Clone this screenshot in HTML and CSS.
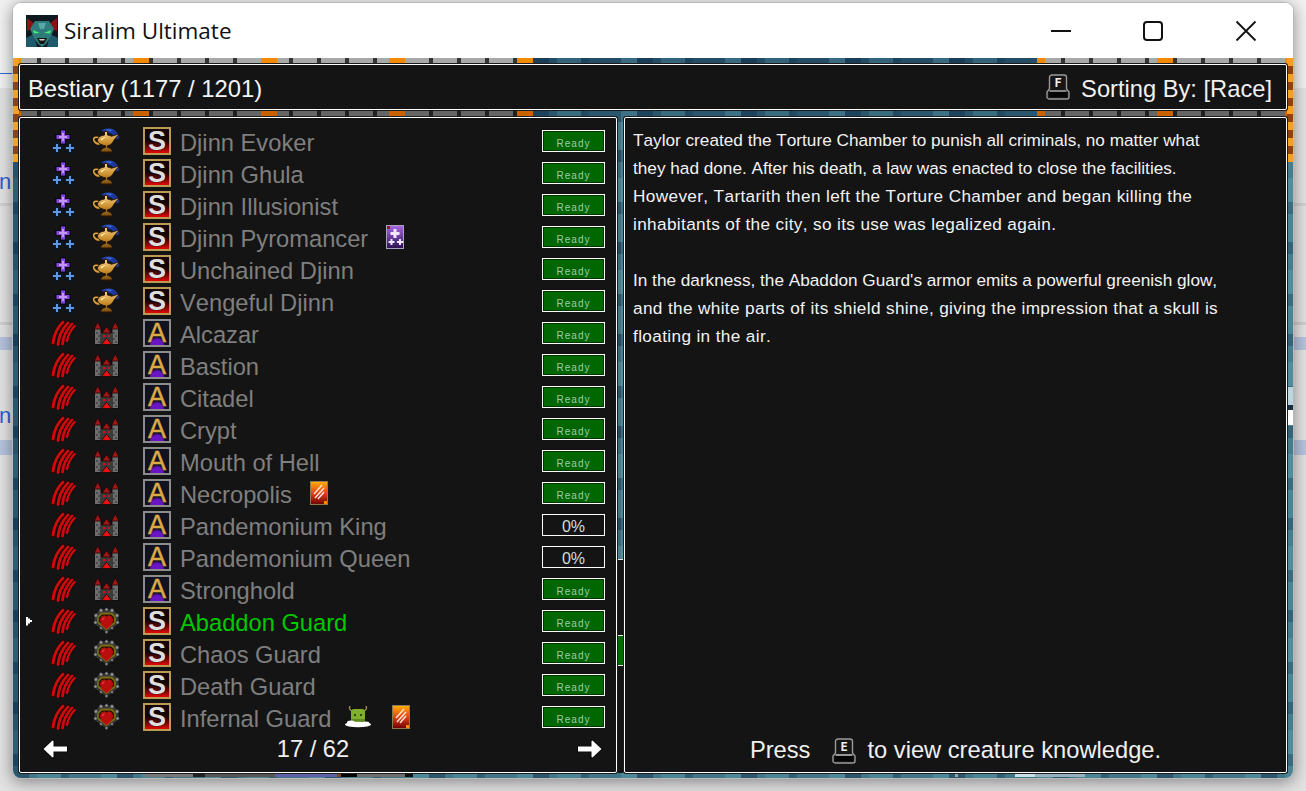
FILE: index.html
```html
<!DOCTYPE html>
<html lang="en">
<head>
<meta charset="utf-8">
<title>Siralim Ultimate</title>
<link rel="stylesheet" href="styles.css">
</head>
<body>
<svg class="defs" aria-hidden="true">
  <defs>
    <linearGradient id="gold" x1="0" y1="0" x2="0" y2="1"><stop offset="0" stop-color="#f6cf7c"/><stop offset=".55" stop-color="#c98d2c"/><stop offset="1" stop-color="#7a4c10"/></linearGradient>
    <linearGradient id="flame" x1="0" y1="0" x2="0" y2="1"><stop offset="0" stop-color="#ffb000"/><stop offset=".5" stop-color="#e8401c"/><stop offset="1" stop-color="#6a0000"/></linearGradient>
    <linearGradient id="violet" x1="0" y1="0" x2="0" y2="1"><stop offset="0" stop-color="#a868e8"/><stop offset="1" stop-color="#2a1050"/></linearGradient>
  </defs>
  <symbol id="spark" viewBox="0 0 26 26">
    <path d="M10 1h6v5h5v6h-5v5h-6v-5H5V6h5z" fill="#0a0818"/>
    <path d="M11 2.500h4v4.500h4.500v4H15v4.500h-4V11H6.500V7H11z" fill="#8a48d8"/>
    <path d="M12 5h2v3h3v2h-3v3h-2v-3H9V8h3z" fill="#c09af2"/>
    <path d="M5 14.500h4v3.500h3.500v4H9v3.500H5V22H1.500v-4H5zM18 14.500h4v3.500h3.500v4H22v3.500h-4V22h-3.500v-4H18z" fill="#0a1828"/>
    <path d="M6 16h2v3h3v2H8v3H6v-3H3v-2h3zM19 16h2v3h3v2h-3v3h-2v-3h-3v-2h3z" fill="#5f98dc"/>
  </symbol>
  <symbol id="lamp" viewBox="0 0 27 26">
    <path d="M8 2.500C12 0 17-.5 20 1c3 1.500 5.500 5 6.500 9l-3 1.500c-1.500-3-4-5.500-7-6.500C13.500 4 11 4 8 2.500z" fill="#1c3796"/>
    <path d="M11 2c3-1 6-1 9 .5l-2.500 1c-2-.7-4.500-1-6.500-1.500z" fill="#3f63d8"/>
    <path d="M5 9.500c-4-1-5.500 1.500-3.500 4 1 1.500 3 2.500 5 2.500" fill="none" stroke="#2a1804" stroke-width="3.600"/>
    <path d="M5 9.500c-4-1-5.500 1.500-3.500 4 1 1.500 3 2.500 5 2.500" fill="none" stroke="#d9a548" stroke-width="1.600"/>
    <path d="M11.500 3.500h3v3.500c1.500.2 2.800.6 4 1.200 1.800-.3 3.500-1 5.500-1.700l1 1c-2 2-3.500 3.500-5 6.500-1 2-3 3.300-5.500 3.800v1.700c2.500.3 4.500 1.500 5 4.500H7.500c.5-3 2.500-4.200 5-4.500v-1.700C8 17 4.500 15 4.500 12.500 4.500 9.500 7.500 7.500 11.500 7z" fill="url(#gold)" stroke="#2a1804" stroke-width="1"/>
    <path d="M7.500 11.500c1.500-2 4-2.800 7-2.500-2.500.7-4.500 1.700-5.500 3.500z" fill="#ffeab4"/>
  </symbol>
  <symbol id="claw" viewBox="0 0 26 26">
    <g fill="none" stroke-linecap="round">
      <path d="M13 2C8 7 4 14 3 23" stroke="#200303" stroke-width="4.400"/>
      <path d="M13 2C8 7 4 14 3 23" stroke="#c80e0c" stroke-width="2.900"/>
      <path d="M18 3C13 8 9 15 8 24.500" stroke="#200303" stroke-width="4.400"/>
      <path d="M18 3C13 8 9 15 8 24.500" stroke="#c80e0c" stroke-width="2.900"/>
      <path d="M22 4C17 9 13.500 16 12.500 24" stroke="#200303" stroke-width="4.200"/>
      <path d="M22 4C17 9 13.500 16 12.500 24" stroke="#c80e0c" stroke-width="2.800"/>
      <path d="M24.500 6C21 10 18 15 17 21" stroke="#200303" stroke-width="3.800"/>
      <path d="M24.500 6C21 10 18 15 17 21" stroke="#c80e0c" stroke-width="2.400"/>
    </g>
  </symbol>
  <symbol id="castle" viewBox="0 0 25 23">
    <path d="M0 6h7.500v3h10V6H25v17H0z" fill="#0e0e0e"/>
    <path d="M1 7h5.500v15H1zM18.500 7H24v15h-5.500z" fill="#6e6e6e"/>
    <path d="M6.500 11h12v11h-12z" fill="#3a3a3a"/>
    <path d="M2 11h2M4 14h2M2 17h2M4 20h2M19 11h2M21 14h2M19 17h2M21 20h2" stroke="#262626" stroke-width="1"/>
    <path d="M3.700 0L7.500 7H0zM21.300 0L25 7h-7.500z" fill="#a01616" stroke="#160404" stroke-width=".8"/>
    <path d="M12.500 4.500L17 11H8z" fill="#a01616" stroke="#160404" stroke-width=".8"/>
    <path d="M9 13h2v2H9zM14 13h2v2h-2z" fill="#d01010"/>
    <path d="M12.500 16l5 6.500h-10z" fill="#e61010" stroke="#0c0c0c" stroke-width=".8"/>
  </symbol>
  <symbol id="guard" viewBox="0 0 27 27">
    <path d="M7 2h13l6 6v9l-12.500 9.500L1 17V8z" fill="#383838" stroke="#0e0e0e" stroke-width="1"/>
    <path d="M8.500 6.500h10l3.500 3.500v5.500l-8.500 6.500L5 15.500V10z" fill="#1c1408" stroke="#7c6c10" stroke-width="1.800"/>
    <path d="M13.500 22c-4.500-3-6.500-5.500-6.500-9 0-3 2-4.500 4-4.500 1.200 0 2 .5 2.500 1.200.5-.7 1.300-1.200 2.500-1.200 2 0 4 1.500 4 4.500 0 3.500-2 6-6.500 9z" fill="#b80e10"/>
    <path d="M9 12.500c.8-1.700 2-2.200 3.400-1.900-1.300.6-2 1.500-2.300 2.900z" fill="#e8433e"/>
    <g fill="#8e8e8e" stroke="#1c1c1c" stroke-width=".6">
      <circle cx="8" cy="3.500" r="2"/><circle cx="13.500" cy="2.500" r="1.700"/><circle cx="19" cy="3.500" r="2"/>
      <circle cx="3" cy="8.500" r="2"/><circle cx="24" cy="8.500" r="2"/><circle cx="2.500" cy="15.500" r="1.800"/><circle cx="24.500" cy="15.500" r="1.800"/>
      <circle cx="8" cy="21" r="1.500"/><circle cx="19" cy="21" r="1.500"/><circle cx="13.500" cy="25" r="1.600"/>
    </g>
  </symbol>
  <symbol id="redcard" viewBox="0 0 18 24">
    <rect x=".5" y=".5" width="17" height="23" fill="url(#flame)" stroke="#8a7a50"/>
    <path d="M4 13l8-9M5 17l9-10M8 18l6-7" stroke="#ffe8d8" stroke-width="1.400"/>
    <rect x="14" y="20" width="3" height="3" fill="#ff8a00"/>
  </symbol>
  <symbol id="purplecard" viewBox="0 0 18 24">
    <rect x=".5" y=".5" width="17" height="23" fill="url(#violet)" stroke="#a9a0c0"/>
    <rect x="1" y="1" width="3" height="3" fill="#a01030"/>
    <path d="M7.500 4h3v3h3v3h-3v3h-3v-3h-3V7h3zM4.500 14h2v2h2v2h-2v2h-2v-2h-2v-2h2zM13 14h2v2h2v2h-2v2h-2v-2h-2v-2h2z" fill="#f0e8ff"/>
  </symbol>
  <symbol id="goblin" viewBox="0 0 26 22">
    <path d="M7 5C4.500 4 4 2 5 0M19 5c2.500-1 3-3 2-5" fill="none" stroke="#a08a50" stroke-width="1.400"/>
    <rect x="6" y="3" width="14" height="14" rx="3" fill="#7fb02c"/>
    <path d="M6 13h14v3a2 2 0 0 1-2 2H8a2 2 0 0 1-2-2z" fill="#5f8a20"/>
    <rect x="9" y="8" width="2" height="2" fill="#2e4a10"/><rect x="15" y="8" width="2" height="2" fill="#2e4a10"/>
    <ellipse cx="13" cy="18.500" rx="13" ry="2.800" fill="#fff"/>
    <ellipse cx="6" cy="17" rx="4" ry="2.400" fill="#fff"/>
    <ellipse cx="21" cy="17.500" rx="3.500" ry="2" fill="#fff"/>
  </symbol>
  <symbol id="key" viewBox="0 0 24 26">
    <path d="M6 1h12c1.500 0 2.500 1 2.500 2.500V15l2.500 3v5c0 1-1 2-2 2H3c-1 0-2-1-2-2v-5l2.500-3V3.500C3.500 2 4.500 1 6 1z" fill="#161616" stroke="#9a9a9a" stroke-width="1.400"/>
    <path d="M3 18h18v5H3z" fill="#040404"/>
    <path d="M3.500 17h17" stroke="#efefef" stroke-width="1.200"/>
  </symbol>
  <symbol id="arrow" viewBox="0 0 26 20">
    <path d="M11 0l2 1.500v5h13v7H13v5L11 20 0 10z" fill="#0a0a0a"/>
    <path d="M10.500 1.500l1 .5v5.500H25v5H11.500V18l-1 .5L1.500 10z" fill="#fff"/>
  </symbol>
</svg>

<div class="desktop">
  <span class="peek peek-one">n</span>
  <span class="peek peek-two">n</span>

  <main class="window">
    <header class="titlebar">
      <svg class="app-icon" viewBox="0 0 32 32" aria-hidden="true">
        <rect width="32" height="32" fill="#0e181e"/>
        <path d="M1 3l8 6-3 5-5 2zM31 3l-8 6 3 5 5 2z" fill="#8a1414"/>
        <path d="M0 32v-9l8-4 3 13zM32 32v-9l-8-4-3 13z" fill="#1f5a6a"/>
        <path d="M9 6h14l5 8-3 7-5 8-4 3-4-3-5-8-3-7z" fill="#2f7a7a"/>
        <path d="M12 8h8l-2 6h-4z" fill="#56a8a8"/>
        <path d="M7 15l7 3-6 .5zM25 15l-7 3 6 .5z" fill="#40f070"/>
        <path d="M11 23h10l-3 6h-4z" fill="#141414"/>
        <path d="M13 24h6l-1 1.500h-4z" fill="#d0d0c0"/>
      </svg>
      <span class="app-name">Siralim Ultimate</span>
      <div class="controls">
        <svg class="ctl" viewBox="0 0 22 22" aria-hidden="true"><path d="M2 11h20" stroke="#111" stroke-width="2"/></svg>
        <svg class="ctl" viewBox="0 0 22 22" aria-hidden="true"><rect x="2" y="2" width="18" height="18" rx="3" fill="none" stroke="#111" stroke-width="2"/></svg>
        <svg class="ctl" viewBox="0 0 22 22" aria-hidden="true"><path d="M1.500 1.500l19 19M20.500 1.500l-19 19" stroke="#111" stroke-width="1.800"/></svg>
      </div>
    </header>

    <div class="stage">
      <section class="panel heading">
        <h1 class="heading-title">Bestiary (1177 / 1201)</h1>
        <div class="sort">
          <svg class="key" viewBox="0 0 24 26" aria-hidden="true"><use href="#key"/><text x="12" y="13" class="key-letter">F</text></svg>
          <span class="sort-label">Sorting By: [Race]</span>
        </div>
      </section>

      <div class="columns">
        <section class="panel list">
          <ul class="rows">
            <li class="row"><span class="marker"></span><span class="slot-race"><svg class="i26"><use href="#spark"/></svg></span><span class="slot-kind"><svg class="i-lamp"><use href="#lamp"/></svg></span><span class="rank rank-s">S</span><span class="name">Djinn Evoker</span><span class="badge ready">Ready</span></li>
            <li class="row"><span class="marker"></span><span class="slot-race"><svg class="i26"><use href="#spark"/></svg></span><span class="slot-kind"><svg class="i-lamp"><use href="#lamp"/></svg></span><span class="rank rank-s">S</span><span class="name">Djinn Ghula</span><span class="badge ready">Ready</span></li>
            <li class="row"><span class="marker"></span><span class="slot-race"><svg class="i26"><use href="#spark"/></svg></span><span class="slot-kind"><svg class="i-lamp"><use href="#lamp"/></svg></span><span class="rank rank-s">S</span><span class="name">Djinn Illusionist</span><span class="badge ready">Ready</span></li>
            <li class="row"><span class="marker"></span><span class="slot-race"><svg class="i26"><use href="#spark"/></svg></span><span class="slot-kind"><svg class="i-lamp"><use href="#lamp"/></svg></span><span class="rank rank-s">S</span><span class="name">Djinn Pyromancer</span><svg class="i-card extra"><use href="#purplecard"/></svg><span class="badge ready">Ready</span></li>
            <li class="row"><span class="marker"></span><span class="slot-race"><svg class="i26"><use href="#spark"/></svg></span><span class="slot-kind"><svg class="i-lamp"><use href="#lamp"/></svg></span><span class="rank rank-s">S</span><span class="name">Unchained Djinn</span><span class="badge ready">Ready</span></li>
            <li class="row"><span class="marker"></span><span class="slot-race"><svg class="i26"><use href="#spark"/></svg></span><span class="slot-kind"><svg class="i-lamp"><use href="#lamp"/></svg></span><span class="rank rank-s">S</span><span class="name">Vengeful Djinn</span><span class="badge ready">Ready</span></li>
            <li class="row"><span class="marker"></span><span class="slot-race"><svg class="i26"><use href="#claw"/></svg></span><span class="slot-kind"><svg class="i-castle"><use href="#castle"/></svg></span><span class="rank rank-a">A</span><span class="name">Alcazar</span><span class="badge ready">Ready</span></li>
            <li class="row"><span class="marker"></span><span class="slot-race"><svg class="i26"><use href="#claw"/></svg></span><span class="slot-kind"><svg class="i-castle"><use href="#castle"/></svg></span><span class="rank rank-a">A</span><span class="name">Bastion</span><span class="badge ready">Ready</span></li>
            <li class="row"><span class="marker"></span><span class="slot-race"><svg class="i26"><use href="#claw"/></svg></span><span class="slot-kind"><svg class="i-castle"><use href="#castle"/></svg></span><span class="rank rank-a">A</span><span class="name">Citadel</span><span class="badge ready">Ready</span></li>
            <li class="row"><span class="marker"></span><span class="slot-race"><svg class="i26"><use href="#claw"/></svg></span><span class="slot-kind"><svg class="i-castle"><use href="#castle"/></svg></span><span class="rank rank-a">A</span><span class="name">Crypt</span><span class="badge ready">Ready</span></li>
            <li class="row"><span class="marker"></span><span class="slot-race"><svg class="i26"><use href="#claw"/></svg></span><span class="slot-kind"><svg class="i-castle"><use href="#castle"/></svg></span><span class="rank rank-a">A</span><span class="name">Mouth of Hell</span><span class="badge ready">Ready</span></li>
            <li class="row"><span class="marker"></span><span class="slot-race"><svg class="i26"><use href="#claw"/></svg></span><span class="slot-kind"><svg class="i-castle"><use href="#castle"/></svg></span><span class="rank rank-a">A</span><span class="name">Necropolis</span><svg class="i-card extra"><use href="#redcard"/></svg><span class="badge ready">Ready</span></li>
            <li class="row"><span class="marker"></span><span class="slot-race"><svg class="i26"><use href="#claw"/></svg></span><span class="slot-kind"><svg class="i-castle"><use href="#castle"/></svg></span><span class="rank rank-a">A</span><span class="name">Pandemonium King</span><span class="badge percent">0%</span></li>
            <li class="row"><span class="marker"></span><span class="slot-race"><svg class="i26"><use href="#claw"/></svg></span><span class="slot-kind"><svg class="i-castle"><use href="#castle"/></svg></span><span class="rank rank-a">A</span><span class="name">Pandemonium Queen</span><span class="badge percent">0%</span></li>
            <li class="row"><span class="marker"></span><span class="slot-race"><svg class="i26"><use href="#claw"/></svg></span><span class="slot-kind"><svg class="i-castle"><use href="#castle"/></svg></span><span class="rank rank-a">A</span><span class="name">Stronghold</span><span class="badge ready">Ready</span></li>
            <li class="row is-current"><span class="marker"></span><span class="slot-race"><svg class="i26"><use href="#claw"/></svg></span><span class="slot-kind"><svg class="i-guard"><use href="#guard"/></svg></span><span class="rank rank-s">S</span><span class="name">Abaddon Guard</span><span class="badge ready">Ready</span></li>
            <li class="row"><span class="marker"></span><span class="slot-race"><svg class="i26"><use href="#claw"/></svg></span><span class="slot-kind"><svg class="i-guard"><use href="#guard"/></svg></span><span class="rank rank-s">S</span><span class="name">Chaos Guard</span><span class="badge ready">Ready</span></li>
            <li class="row"><span class="marker"></span><span class="slot-race"><svg class="i26"><use href="#claw"/></svg></span><span class="slot-kind"><svg class="i-guard"><use href="#guard"/></svg></span><span class="rank rank-s">S</span><span class="name">Death Guard</span><span class="badge ready">Ready</span></li>
            <li class="row"><span class="marker"></span><span class="slot-race"><svg class="i26"><use href="#claw"/></svg></span><span class="slot-kind"><svg class="i-guard"><use href="#guard"/></svg></span><span class="rank rank-s">S</span><span class="name">Infernal Guard</span><svg class="i-goblin"><use href="#goblin"/></svg><svg class="i-card extra-tight"><use href="#redcard"/></svg><span class="badge ready">Ready</span></li>
          </ul>
          <div class="pager">
            <svg class="arrow" aria-hidden="true"><use href="#arrow"/></svg>
            <span class="page-count">17 / 62</span>
            <svg class="arrow arrow-next" aria-hidden="true"><use href="#arrow"/></svg>
          </div>
        </section>

        <div class="gutter">
          <div class="gutter-open"></div>
          <div class="scrolltrack"><div class="scrollthumb"></div></div>
        </div>

        <section class="panel detail">
          <div class="lore">
            <p>
              <span class="lore-line">Taylor created the Torture Chamber to punish all criminals, no matter what</span>
              <span class="lore-line">they had done. After his death, a law was enacted to close the facilities.</span>
              <span class="lore-line lore-wide">However, Tartarith then left the Torture Chamber and began killing the</span>
              <span class="lore-line lore-wide">inhabitants of the city, so its use was legalized again.</span>
            </p>
            <p>
              <span class="lore-line">In the darkness, the Abaddon Guard's armor emits a powerful greenish glow,</span>
              <span class="lore-line lore-wide">and the white parts of its shield shine, giving the impression that a skull is</span>
              <span class="lore-line lore-wide">floating in the air.</span>
            </p>
          </div>
          <div class="hint">
            <span>Press</span>
            <svg class="key hint-key" viewBox="0 0 24 26" aria-hidden="true"><use href="#key"/><text x="12" y="13" class="key-letter">E</text></svg>
            <span>to view creature knowledge.</span>
          </div>
        </section>
      </div>
    </div>
  </main>
</div>
</body>
</html>
```

FILE: styles.css
```css
* { box-sizing: border-box; }

html, body {
  margin: 0;
  height: 100%;
  overflow: hidden;
}

body {
  font-family: "Liberation Sans", Arial, sans-serif;
  background: #e6e6e6;
}

.defs {
  position: absolute;
  width: 0;
  height: 0;
}

.desktop {
  position: relative;
  width: 1306px;
  height: 791px;
  overflow: hidden;
  background:
    linear-gradient(#2f66d8, #2f66d8) 0 73px / 12px 1px no-repeat,
    linear-gradient(to bottom,
      #f2f2f2 0 88px, #e4e4e4 88px 203px, #d2d2d2 203px 206px,
      #e2e2e2 206px 322px, #cfcfcf 322px 325px, #e4e4e4 325px 337px,
      #b6c4de 337px 350px, #e4e4e4 350px 440px, #b6c4de 440px 455px,
      #e2e2e2 455px 100%);
}

.peek {
  position: absolute;
  left: -1px;
  font-size: 22px;
  line-height: 24px;
  color: #2a62d6;
}

.peek-one { top: 170px; }
.peek-two { top: 404px; }

.window {
  position: absolute;
  left: 12px;
  top: 2px;
  width: 1282px;
  height: 777px;
  display: flex;
  flex-direction: column;
  border: 1px solid #b8b8b8;
  border-radius: 9px;
  overflow: hidden;
  background: #fff;
  box-shadow: 0 3px 16px rgba(0, 0, 0, .42);
}

.titlebar {
  display: flex;
  align-items: center;
  height: 55px;
  padding-left: 13px;
  background: #fff;
  flex: none;
}

.app-icon {
  width: 32px;
  height: 32px;
  flex: none;
}

.app-name {
  margin-left: 6px;
  font-family: "Open Sans", sans-serif;
  font-size: 22.500px;
  color: #111;
}

.controls {
  display: flex;
  align-items: center;
  margin-left: auto;
  margin-right: 36px;
  gap: 71px;
}

.ctl {
  width: 22px;
  height: 22px;
}

.stage {
  --orange: repeating-linear-gradient(90deg, #f08a00 0 8px, transparent 8px 120px, #f08a00 120px 128px);
  --brick: repeating-linear-gradient(90deg, #a8a8a8 0 24px, #333 24px 28px);
  --orange-dim: repeating-linear-gradient(90deg, #c86400 0 8px, transparent 8px 120px, #c86400 120px 128px);
  --brick-dim: repeating-linear-gradient(90deg, #666 0 24px, #222 24px 28px);
  --side: repeating-linear-gradient(180deg, #f5a021 0 8px, #8a4510 8px 16px);
  flex: 1;
  display: flex;
  flex-direction: column;
  gap: 7px;
  padding: 6px 6px 5px;
  font-kerning: none;
  background-color: #386c80;
  background-image:
    var(--side), var(--side),
    linear-gradient(90deg, #777 0 48px, #222 48px 60px, #555 60px 130px, #6060a8 130px 192px, #7a4a30 192px 196px, #050505 196px 212px, #6e6e6e 212px 260px, #111 260px 268px),
    linear-gradient(90deg, #8fa6ae 0 3px, transparent 3px 60px, #c9dfe6 60px 80px, #97b2bd 80px 120px),
    linear-gradient(180deg, #bcd6e0 0 18px, #172c40 18px 23px, #fff 23px 38px),
    var(--orange), var(--brick),
    var(--orange), var(--brick),
    var(--orange-dim), var(--brick-dim),
    var(--orange-dim), var(--brick-dim),
    repeating-linear-gradient(90deg, rgba(10, 40, 70, .4) 0 16px, transparent 16px 24px, rgba(120, 190, 200, .2) 24px 48px, rgba(10, 40, 70, .28) 48px 56px, transparent 56px 88px, rgba(120, 190, 200, .26) 88px 104px),
    repeating-linear-gradient(180deg, rgba(10, 40, 70, .45) 0 12px, transparent 12px 28px, rgba(120, 190, 200, .24) 28px 52px, rgba(10, 40, 70, .3) 52px 64px, rgba(120, 190, 200, .12) 64px 92px);
  background-repeat: no-repeat, no-repeat, no-repeat, no-repeat, no-repeat, no-repeat, no-repeat, no-repeat, no-repeat, no-repeat, no-repeat, no-repeat, no-repeat, repeat, repeat;
  background-size:
    6px 104px, 6px 104px,
    268px 5px, 130px 5px, 6px 38px,
    520px 6px, 520px 6px, 256px 6px, 256px 6px,
    520px 7px, 520px 7px, 256px 7px, 256px 7px,
    104px 100%, 100% 92px;
  background-position:
    0 0, 1274px 0,
    132px 714px, 942px 714px, 1274px 329px,
    0 0, 0 0, 1024px 0, 1024px 0,
    0 52px, 0 52px, 1024px 52px, 1024px 52px,
    0 0, 0 0;
}

.panel {
  background: #141414;
  border: 1px solid #fff;
  border-radius: 2px;
  box-shadow: 0 0 0 1px #1c1c1c;
  color: #fff;
}

.heading {
  flex: none;
  height: 46px;
  display: flex;
  align-items: center;
  justify-content: space-between;
  padding: 4px 14px 0 8px;
}

.heading-title {
  margin: 0;
  font-size: 23.800px;
  font-weight: 400;
  color: #f4f4f4;
}

.sort {
  display: flex;
  align-items: center;
  gap: 11px;
}

.sort-label {
  font-size: 23.700px;
  color: #f0f0f0;
}

.key {
  width: 24px;
  height: 26px;
  flex: none;
}

.sort .key { margin-top: -4px; }

.key-letter {
  font-family: "DejaVu Sans Mono", monospace;
  font-size: 12px;
  font-weight: 700;
  fill: #f0f0f0;
  text-anchor: middle;
}

.columns {
  flex: 1;
  min-height: 0;
  display: flex;
}

.list {
  width: 598px;
  flex: none;
  display: flex;
  flex-direction: column;
  padding: 7px 11px 0 0;
}

.rows {
  list-style: none;
  margin: 0;
  padding: 0;
}

.row {
  display: flex;
  align-items: center;
  height: 32px;
}

.marker {
  width: 6px;
  height: 9px;
  margin-left: 6px;
  margin-right: 6px;
  flex: none;
}

.is-current .marker {
  background: #fff;
  clip-path: polygon(0 0, 34% 0, 34% 22%, 67% 22%, 67% 38%, 100% 38%, 100% 62%, 67% 62%, 67% 78%, 34% 78%, 34% 100%, 0 100%);
}

.slot-race,
.slot-kind {
  display: flex;
  align-items: center;
  justify-content: center;
  flex: none;
}

.slot-race { width: 50px; }
.slot-kind { width: 36px; }

.i26 { width: 26px; height: 26px; }
.i-lamp { width: 27px; height: 26px; }
.i-castle { width: 25px; height: 23px; }
.i-guard { width: 27px; height: 27px; margin-top: -2px; }
.i-card { width: 18px; height: 24px; flex: none; }
.i-goblin { width: 26px; height: 22px; margin-left: 14px; flex: none; }
.extra { margin-left: 18px; }
.extra-tight { margin-left: 21px; }

.rank {
  width: 28px;
  height: 28px;
  margin-left: 19px;
  flex: none;
  display: flex;
  align-items: center;
  justify-content: center;
  font-size: 27px;
  line-height: 1;
  border: 2px solid #bb9a52;
}

.rank-s {
  font-weight: 700;
  color: #dedede;
  background: linear-gradient(#160303 0 50%, #640505 72%, #e00808 100%);
  text-shadow: 0 0 1px #000;
}

.rank-a {
  color: #dca848;
  border-color: #8c8c8c;
  background:
    radial-gradient(ellipse 8px 8px at 50% 100%, #6a14c8 0 70%, transparent 100%),
    #12121e;
  -webkit-text-stroke: .5px #dca848;
}

.name {
  margin-left: 9px;
  padding-top: 5px;
  font-size: 23.700px;
  color: #7f7f7f;
  white-space: nowrap;
}

.is-current .name { color: #00c800; }

.badge {
  margin-left: auto;
  width: 63px;
  height: 22px;
  flex: none;
  display: flex;
  align-items: center;
  justify-content: center;
  border: 1px solid #fff;
}

.ready {
  padding-top: 4px;
  font-size: 10px;
  letter-spacing: 1px;
  color: #a4cca4;
  background: #006600;
  box-shadow: inset 0 0 0 1px #003800;
}

.percent {
  padding-top: 3px;
  font-size: 16px;
  color: #dadada;
  background: #141414;
}

.pager {
  flex: 1;
  display: flex;
  align-items: center;
  justify-content: space-between;
  padding: 0 2px 7px 22px;
}

.arrow {
  width: 26px;
  height: 20px;
  flex: none;
}

.arrow-next { transform: scaleX(-1); }

.page-count {
  margin-right: 19px;
  font-size: 23.700px;
  color: #f0f0f0;
}

.gutter {
  width: 7px;
  flex: none;
  display: flex;
  flex-direction: column;
}

.gutter-open {
  height: 442px;
  flex: none;
}

.scrolltrack {
  flex: 1;
  margin: 0 1px;
  padding-top: 75px;
  background: #141414;
  border-top: 1px solid #e8e8e8;
}

.scrollthumb {
  height: 31px;
  background: #006c00;
  border-top: 1px solid #e8e8e8;
  border-bottom: 1px solid #e8e8e8;
}

.detail {
  flex: 1;
  min-width: 0;
  display: flex;
  flex-direction: column;
  justify-content: space-between;
  padding: 8px 8px 8px;
}

.lore {
  font-size: 17.200px;
  line-height: 28px;
  color: #f2f2f2;
}

.lore p { margin: 0 0 28px; }

.lore-line {
  display: block;
  white-space: nowrap;
}

.lore-wide { letter-spacing: .36px; }

.hint {
  display: flex;
  align-items: center;
  justify-content: center;
  gap: 11px;
  font-size: 23.700px;
  color: #f0f0f0;
}

.hint-key { margin-left: 11px; }
```
